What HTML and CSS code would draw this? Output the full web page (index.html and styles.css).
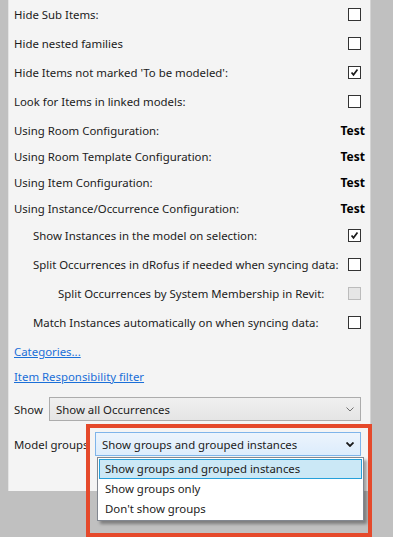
FILE: index.html
```html
<!DOCTYPE html>
<html lang="en">
<head>
    <meta charset="UTF-8">
    <meta name="viewport" content="width=device-width, initial-scale=1.0">
    <title>Filter Settings</title>
    <link rel="stylesheet" href="styles.css">
</head>
<body>

<div class="panel">
    <div class="check-rows">
        <div class="row"><span>Hide Sub Items:</span><span class="box"></span></div>
        <div class="row"><span>Hide nested families</span><span class="box"></span></div>
        <div class="row"><span>Hide Items not marked 'To be modeled':</span><span class="box checked"><svg viewBox="0 0 13 13"><path d="M3 6.5 L5.3 9.3 L10 3"/></svg></span></div>
        <div class="row"><span>Look for Items in linked models:</span><span class="box"></span></div>
    </div>

    <div class="config-rows">
        <div class="row"><span>Using Room Configuration:</span><b>Test</b></div>
        <div class="row"><span>Using Room Template Configuration:</span><b>Test</b></div>
        <div class="row"><span>Using Item Configuration:</span><b>Test</b></div>
        <div class="row"><span>Using Instance/Occurrence Configuration:</span><b>Test</b></div>
    </div>

    <div class="check-rows sub">
        <div class="row indent"><span>Show Instances in the model on selection:</span><span class="box checked"><svg viewBox="0 0 13 13"><path d="M3 6.5 L5.3 9.3 L10 3"/></svg></span></div>
        <div class="row indent"><span>Split Occurrences in dRofus if needed when syncing data:</span><span class="box"></span></div>
        <div class="row indent2"><span>Split Occurrences by System Membership in Revit:</span><span class="box disabled"></span></div>
        <div class="row indent"><span>Match Instances automatically on when syncing data:</span><span class="box"></span></div>
    </div>

    <div class="links">
        <a href="#">Categories...</a>
        <a href="#">Item Responsibility filter</a>
    </div>

    <div class="combo-row show-row">
        <span class="label">Show</span>
        <div class="combo">
            <span>Show all Occurrences</span>
            <svg class="chev" viewBox="0 0 8 5"><path d="M0.5 0.5 L4 4 L7.5 0.5"/></svg>
        </div>
    </div>

    <div class="combo-row groups-row">
        <span class="label">Model groups</span>
        <div class="combo open">
            <span>Show groups and grouped instances</span>
            <svg class="chev" viewBox="0 0 8 5"><path d="M0.5 0.5 L4 4 L7.5 0.5"/></svg>
        </div>
    </div>
</div>

<ul class="dropdown">
    <li class="selected">Show groups and grouped instances</li>
    <li>Show groups only</li>
    <li>Don't show groups</li>
</ul>

<div class="highlight"></div>

</body>
</html>
```

FILE: styles.css
```css
body {
    margin: 0;
    background: #c0c0c0;
    font-family: 'Noto Sans', sans-serif;
    font-size: 11.4px;
    color: #1b1b1b;
    height: 537px;
    position: relative;
    overflow: hidden;
    white-space: nowrap;
}
.panel {
    margin-left: 8px;
    width: 363px;
    height: 491px;
    background: #f4f4f4;
    border-left: 1px solid #e4e4e4;
    border-right: 1px solid #d4d4d4;
    box-sizing: border-box;
    padding: 0 9px 0 5px;
}
.row {
    display: flex;
    justify-content: space-between;
    align-items: center;
}
.check-rows .row {
    height: 29px;
}
.config-rows {
    margin-top: 1px;
}
.config-rows .row {
    height: 26px;
}
.config-rows b {
    font-weight: bold;
    font-size: 12px;
    color: #000;
    margin-right: -4px;
}
.indent {
    padding-left: 19px;
}
.indent2 {
    padding-left: 44px;
}
.box {
    width: 13px;
    height: 13px;
    border: 1px solid #333;
    background: #fff;
    box-sizing: border-box;
    flex-shrink: 0;
}
.box svg {
    display: block;
    width: 11px;
    height: 11px;
}
.box path {
    fill: none;
    stroke: #1a1a1a;
    stroke-width: 2;
}
.box.disabled {
    background: #e6e6e6;
    border-color: #bcbcbc;
}
.links {
    display: flex;
    flex-direction: column;
    margin-top: 2px;
}
.links a {
    height: 25px;
    line-height: 25px;
    color: #1a6fd8;
    text-decoration: underline;
    align-self: flex-start;
}
.combo-row {
    display: flex;
    align-items: center;
}
.show-row {
    margin-top: 8px;
}
.groups-row {
    margin-top: 11px;
}
.label {
    flex-shrink: 0;
}
.combo {
    height: 24px;
    box-sizing: border-box;
    border: 1px solid #acacac;
    background: linear-gradient(#f0f0f0, #e5e5e5);
    display: flex;
    align-items: center;
    justify-content: space-between;
    padding: 0 6px 0 6px;
}
.show-row .combo {
    margin-left: auto;
    width: 312px;
}
.groups-row .combo {
    margin-left: auto;
    width: 266px;
}
.combo.open {
    border-color: #7eb4ea;
    background: linear-gradient(#ecf4fc, #dcecfc);
}
.chev {
    width: 8px;
    height: 5px;
}
.chev path {
    fill: none;
    stroke: #707070;
    stroke-width: 1;
}
.combo.open .chev path {
    stroke: #1a1a1a;
    stroke-width: 1.8;
}
.dropdown {
    position: absolute;
    left: 97px;
    top: 457px;
    width: 267px;
    margin: 0;
    padding: 1px;
    list-style: none;
    background: #fff;
    border: 1px solid #828790;
    box-sizing: border-box;
    box-shadow: 3px 3px 3px rgba(0, 0, 0, 0.35);
}
.dropdown li {
    height: 20px;
    line-height: 18px;
    padding: 0 5px;
    border: 1px solid transparent;
    box-sizing: border-box;
}
.dropdown li.selected {
    background: #cbe8f6;
    border-color: #26a0da;
}
.highlight {
    position: absolute;
    left: 86px;
    top: 424px;
    width: 286px;
    height: 113px;
    border: 4px solid #e5492b;
    box-sizing: border-box;
}
```
